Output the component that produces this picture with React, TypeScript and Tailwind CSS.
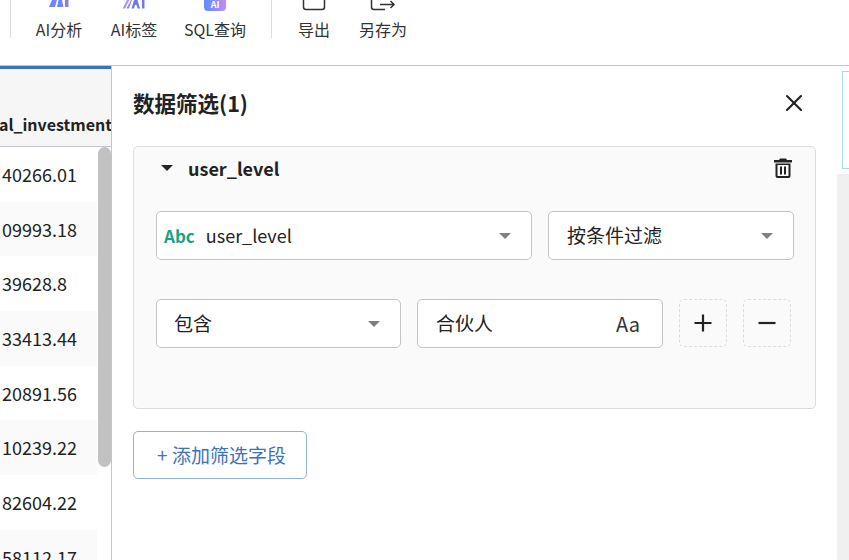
import { X } from "lucide-react";

const font = { fontFamily: '"Noto Sans CJK SC", "Noto Sans", sans-serif' };

const rows = ["40266.01", "09993.18", "39628.8", "33413.44", "20891.56", "10239.22", "82604.22", "58112.17"];

function Caret({ className }: { className: string }) {
  return (
    <svg width="12" height="6" viewBox="0 0 12 6" className={className}>
      <path d="M0 0h12L6 6z" fill="currentColor" />
    </svg>
  );
}

function ToolItem({ label, className, icon }: { label: string; className: string; icon: React.ReactNode }) {
  return (
    <div className={`flex flex-col items-center ${className}`}>
      <div className="h-[11px] flex justify-center items-start overflow-hidden">{icon}</div>
      <div className="mt-[7px] text-[16px] leading-[22px] text-[#333] whitespace-nowrap">{label}</div>
    </div>
  );
}

function Select({ className, children }: { className: string; children: React.ReactNode }) {
  return (
    <div className={`h-[49px] rounded-[5px] border border-[#c4c4c4] bg-white flex items-center ${className}`}>
      {children}
    </div>
  );
}

export default function App() {
  return (
    <div className="w-[849px] h-[560px] overflow-hidden bg-white flex flex-col text-[#222]" style={font}>
      {/* toolbar */}
      <div className="h-[66px] shrink-0 border-b border-[#c3c5cc]">
        <div className="h-[38px] flex items-start">
          <div className="w-[11px] h-full border-r border-[#dcdcdc]" />
          <ToolItem
            label="AI分析"
            className="w-[74px] ml-[11px]"
            icon={
              <svg width="22" height="11" viewBox="0 0 22 11">
                <defs>
                  <linearGradient id="an" x1="0" y1="0" x2="1" y2="0">
                    <stop offset="0" stopColor="#4f8ff7" />
                    <stop offset="1" stopColor="#8f7cf2" />
                  </linearGradient>
                </defs>
                <path d="M1 7 L4 0 H9 L7 7z" fill="url(#an)" />
                <path d="M9 7 L10.500 0 H14 L15.500 7z" fill="url(#an)" />
                <rect x="17" y="0" width="3.500" height="7" fill="#8f7cf2" />
              </svg>
            }
          />
          <ToolItem
            label="AI标签"
            className="w-[74px] ml-[1px]"
            icon={
              <svg width="24" height="11" viewBox="0 0 24 11">
                <path d="M0.500 8.500 L5 0 H7.500 L3 8.500z" fill="#a79bee" />
                <path d="M4.500 8.500 L9 0 H10 L7 8.500z" fill="#8f86e8" />
                <path d="M9.500 8.500 L12 0 H15.500 L18 8.500 H15.500 L14.500 5 H13 L12 8.500z" fill="#6f7ce8" />
                <rect x="20" y="0" width="2.500" height="8.500" fill="#6f7ce8" />
              </svg>
            }
          />
          <ToolItem
            label="SQL查询"
            className="w-[70px] ml-[9px]"
            icon={
              <svg width="22" height="11" viewBox="0 0 22 11">
                <defs>
                  <linearGradient id="sq" x1="0" y1="0" x2="1" y2="0">
                    <stop offset="0" stopColor="#5b8ff9" />
                    <stop offset="1" stopColor="#c58af0" />
                  </linearGradient>
                </defs>
                <path d="M0 0h22v7a4 4 0 0 1-4 4H4a4 4 0 0 1-4-4z" fill="url(#sq)" />
                <text x="11" y="7.500" textAnchor="middle" fontSize="9" fontWeight="700" fill="#fff">AI</text>
              </svg>
            }
          />
          <div className="w-[1px] h-full bg-[#dcdcdc] ml-[21px]" />
          <ToolItem
            label="导出"
            className="w-[50px] ml-[17px]"
            icon={
              <svg width="24" height="11" viewBox="0 0 24 11">
                <path d="M1.500 0v7a2.500 2.500 0 0 0 2.500 2.500h16a2.500 2.500 0 0 0 2.500-2.500V0" fill="none" stroke="#333" strokeWidth="1.500" />
              </svg>
            }
          />
          <ToolItem
            label="另存为"
            className="w-[60px] ml-[14px]"
            icon={
              <svg width="26" height="11" viewBox="0 0 26 11">
                <path d="M1.500 0v7a2.500 2.500 0 0 0 2.500 2.500h11" fill="none" stroke="#333" strokeWidth="1.500" />
                <path d="M10 4.500h14M20.500 1 24 4.500 20.500 8" fill="none" stroke="#333" strokeWidth="1.500" />
              </svg>
            }
          />
        </div>
      </div>

      <div className="flex-1 flex min-h-0">
        {/* table behind the panel */}
        <div className="w-[112px] shrink-0 border-r border-[#c3c5cc] flex flex-col overflow-hidden">
          <div className="h-[81px] shrink-0 border-t-[3px] border-[#3b73b9] border-b border-b-[#c3c5cc] bg-[#f6f6f7] flex items-center justify-end">
            <span className="text-[16px] font-semibold whitespace-nowrap mt-[32px] -mr-[1px] text-[#222]">
              al_investment
            </span>
          </div>
          <div className="flex-1 relative">
            {rows.map((r, i) => (
              <div
                key={r}
                className={`h-[54.700px] w-[97px] pl-[2px] flex items-center text-[18px] text-[#222] whitespace-nowrap ${i % 2 === 1 ? "bg-[#fafafa]" : "bg-white"}`}
              >
                {r}
              </div>
            ))}
            <div className="absolute left-[98px] top-[0px] w-[13px] h-[320px] rounded-[7px] bg-[#c2c2c2]" />
          </div>
        </div>

        {/* filter panel */}
        <div className="w-[725px] shrink-0 pl-[21px] pr-[21px] flex flex-col">
          <div className="h-[80px] shrink-0 flex items-center justify-between pb-[5px]">
            <span className="text-[21.500px] font-bold text-[#222]">数据筛选(1)</span>
            <X size={28} strokeWidth={1.800} className="text-[#222] mr-[8px] -mt-[1px]" />
          </div>
          <div className="w-[683px] h-[263px] shrink-0 rounded-[5px] border border-[#dcdcdc] bg-[#fafafa] pl-[22px] pr-[21px]">
            <div className="h-[42px] flex items-center pl-[5px] relative">
              <Caret className="text-[#222] w-[12px] mr-[15px]" />
              <span className="text-[18px] font-bold text-[#222]">user_level</span>
              <svg
                width="18"
                height="20"
                viewBox="0 0 18 20"
                className="absolute right-[2px] top-[11px] text-[#222]"
              >
                <path
                  d="M6 0.500h6l1 1.500h5v2.500H0V2h5zM1.500 5.500h15V18a2 2 0 0 1-2 2h-11a2 2 0 0 1-2-2zM3.500 7v11h11V7zM6 8.500h2v8H6zM10 8.500h2v8h-2z"
                  fill="currentColor"
                  fillRule="evenodd"
                />
              </svg>
            </div>
            <div className="mt-[22px] flex gap-[16px]">
              <Select className="w-[376px] pl-[7px] pr-[20px]">
                <span className="text-[17px] font-bold text-[#1aa383] mr-[11px]">Abc</span>
                <span className="text-[18px] text-[#222] flex-1">user_level</span>
                <Caret className="text-[#808080]" />
              </Select>
              <Select className="w-[246px] pl-[18px] pr-[20px]">
                <span className="text-[19px] text-[#222] flex-1">按条件过滤</span>
                <Caret className="text-[#808080]" />
              </Select>
            </div>
            <div className="mt-[39px] flex items-start">
              <Select className="w-[245px] pl-[17px] pr-[20px]">
                <span className="text-[19px] text-[#222] flex-1">包含</span>
                <Caret className="text-[#808080]" />
              </Select>
              <Select className="w-[246px] ml-[16px] pl-[18px] pr-[22px]">
                <span className="text-[19px] text-[#222] flex-1">合伙人</span>
                <span className="text-[20px] text-[#333]">Aa</span>
              </Select>
              <div className="w-[48px] h-[48px] ml-[16px] rounded-[5px] border border-dashed border-[#dcdcdc] flex items-center justify-center">
                <svg width="18" height="18" viewBox="0 0 18 18">
                  <path d="M9 0.500v17M0.500 9h17" stroke="#222" strokeWidth="2.200" />
                </svg>
              </div>
              <div className="w-[48px] h-[48px] ml-[16px] rounded-[5px] border border-dashed border-[#dcdcdc] flex items-center justify-center">
                <svg width="18" height="18" viewBox="0 0 18 18">
                  <path d="M0.500 9h17" stroke="#222" strokeWidth="2.200" />
                </svg>
              </div>
            </div>
          </div>
          <button className="mt-[22px] w-[174px] h-[48px] pl-[3px] rounded-[5px] border border-[#8fb2e0] bg-white text-[19px] text-[#3b73b9] flex items-center justify-center">
            + 添加筛选字段
          </button>
        </div>

        {/* sliver of the page on the right */}
        <div className="flex-1 min-w-0 relative">
          <div className="absolute left-[5px] top-[5px] h-[98px] right-0 border border-r-0 border-[#a8d4f8]" />
          <div className="absolute left-0 top-[108px] bottom-0 right-0 bg-[#f0f0f0]" />
        </div>
      </div>
    </div>
  );
}
